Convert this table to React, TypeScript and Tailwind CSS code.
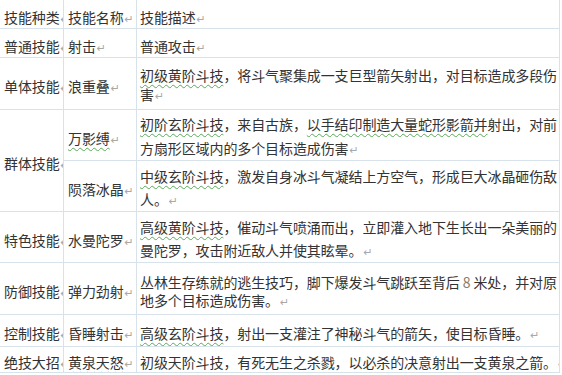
import type { ReactNode } from 'react'

const line = 'border-[#d8e2ea]'

function Mark() {
  return (
    <span className="ml-[1px] inline-block w-0 whitespace-nowrap font-['DejaVu_Sans'] text-[11px] leading-none text-[#a8a8a8]">
      ↵
    </span>
  )
}

function Wavy({ children }: { children: ReactNode }) {
  return (
    <span className="underline decoration-[#5aa85a] decoration-wavy decoration-1 underline-offset-[3px]">
      {children}
    </span>
  )
}

type CellProps = {
  children: ReactNode
  className?: string
  lead?: string
  pad?: string
}

function Cell({ children, className = '', lead = 'leading-[20px]', pad = 'pt-[5px]' }: CellProps) {
  return (
    <div className={`flex items-center overflow-hidden border-b border-r ${pad} ${line} ${className}`}>
      <p className={`w-full ${lead}`}>{children}</p>
    </div>
  )
}

function Kind({ children, className = '' }: { children: ReactNode; className?: string }) {
  return (
    <Cell className={`whitespace-nowrap pl-1 ${className}`}>
      {children}
      <Mark />
    </Cell>
  )
}

export default function App() {
  return (
    <div className="min-h-screen bg-white">
      <div className="grid w-[560px] grid-cols-[64px_73px_423px] grid-rows-[29px_29px_52px_51px_51px_51px_52px_32px_26px] font-['Noto_Sans_CJK_SC',sans-serif] text-[14px] tracking-[-0.1px] text-[#333]">
        <Kind>技能种类</Kind>
        <Cell className="pl-1">技能名称<Mark /></Cell>
        <Cell className="pl-[3px]">技能描述<Mark /></Cell>

        <Kind>普通技能</Kind>
        <Cell className="pl-1">射击<Mark /></Cell>
        <Cell className="pl-[3px]">普通攻击<Mark /></Cell>

        <Kind>单体技能</Kind>
        <Cell className="pl-1">浪重叠<Mark /></Cell>
        <Cell className="pl-[3px]" lead="leading-[19px]" pad="pt-[3px]">
          <Wavy>初级黄阶斗技</Wavy>，将斗气聚集成一支巨型箭矢射出，对目标造成多段伤害<Mark />
        </Cell>

        <Kind className="row-span-2">群体技能</Kind>
        <Cell className="pl-1"><Wavy>万影缚</Wavy><Mark /></Cell>
        <Cell className="pl-[3px]" lead="leading-[24px]" pad="pt-[1px]">
          <Wavy>初阶玄阶斗技</Wavy>，来自古族，<Wavy>以手结印制造大量蛇形影箭并</Wavy>射出，对前方扇形区域内的多个目标造成伤害<Mark />
        </Cell>
        <Cell className="pl-1">陨落冰晶<Mark /></Cell>
        <Cell className="pl-[3px]" lead="leading-[23px]" pad="pt-[3px]">
          <Wavy>中级玄阶斗技</Wavy>，激发自身冰斗气凝结上方空气，形成巨大冰晶砸伤敌人。<Mark />
        </Cell>

        <Kind>特色技能</Kind>
        <Cell className="pl-1">水曼陀罗<Mark /></Cell>
        <Cell className="pl-[3px]" lead="leading-[23px]" pad="pt-[3px]">
          <Wavy>高级黄阶斗技</Wavy>，催动斗气喷涌而出，立即灌入地下生长出一朵美丽的曼陀罗，攻击附近敌人并使其眩晕。<Mark />
        </Cell>

        <Kind>防御技能</Kind>
        <Cell className="pl-1">弹力劲射<Mark /></Cell>
        <Cell className="pl-[3px]" lead="leading-[18px]">
          丛林生存练就的逃生技巧，脚下爆发斗气跳跃至背后 <span className="text-[#8b7b62]">8</span> 米处，并对原地多个目标造成伤害。<Mark />
        </Cell>

        <Kind>控制技能</Kind>
        <Cell className="pl-1">昏睡射击<Mark /></Cell>
        <Cell className="pl-[3px]">
          <Wavy>高级玄阶斗技</Wavy>，射出一支灌注了神秘斗气的箭矢，使目标昏睡。<Mark />
        </Cell>

        <Kind>绝技大招</Kind>
        <Cell className="pl-1"><Wavy>黄泉天怒</Wavy><Mark /></Cell>
        <Cell className="pl-[3px]">
          初级天阶斗技，有死无生之杀戮，以必杀的决意射出一支黄泉之箭。<Mark />
        </Cell>
      </div>
    </div>
  )
}
